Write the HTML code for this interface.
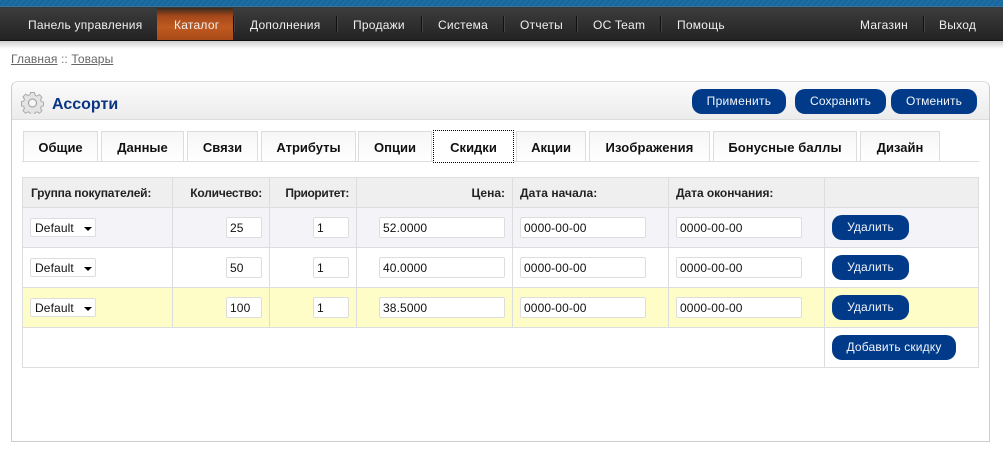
<!DOCTYPE html>
<html><head><meta charset="utf-8">
<style>
html,body{margin:0;padding:0;background:#fff}
body{width:1003px;height:453px;position:relative;overflow:hidden;font-family:"Liberation Sans",Arial,sans-serif;font-size:12px;color:#000}
.a{position:absolute}
#top{left:0;top:0;width:1003px;height:6px;background:repeating-linear-gradient(135deg,#1b6fa6 0 2px,#17659a 2px 4px)}
#top2{left:0;top:6px;width:1003px;height:2px;background:linear-gradient(#4a8db5,#222)}
#nav{left:0;top:8px;width:1003px;height:33px;background:linear-gradient(#3c3c3c,#232323);border-bottom:1px solid #111;box-sizing:border-box}
#sh{left:0;top:41px;width:1003px;height:8px;background:linear-gradient(#cfcfcf,#fff)}
.n{position:absolute;top:17px;color:#f0f0f0;font-size:12px;line-height:16px;white-space:nowrap;letter-spacing:.25px}
.sep{position:absolute;top:16px;width:1px;height:16px;background:#111;border-right:1px solid #444}
#act{left:157px;top:8px;width:76px;height:32px;background:linear-gradient(#3a2a20 0,#a5481a 25%,#bf5a20 60%,#a84a18 100%)}
#crumb{left:11px;top:52px;color:#777;line-height:15px;letter-spacing:.12px}
#crumb u{color:#666}
#box{left:11px;top:81px;width:979px;height:361px;box-sizing:border-box;border:1px solid #ccc;border-top-color:#ddd;border-radius:7px 7px 0 0;background:#fff}
#hd{left:12px;top:82px;width:977px;height:38px;background:linear-gradient(#fbfbfb,#ececec);border-bottom:1px solid #ddd;box-sizing:border-box;border-radius:6px 6px 0 0}
#ttl{left:52px;top:95px;color:#0b3580;font-size:16px;font-weight:bold;line-height:19px}
.b{position:absolute;background:#003a88;color:#f2f5fa;font-size:12px;text-align:center;border-radius:10px;height:25px;line-height:25px;white-space:nowrap;letter-spacing:.15px}
.t{position:absolute;top:131px;height:30px;box-sizing:border-box;border:1px solid #ddd;border-bottom:0;background:linear-gradient(#f6f6f6,#fff);font-weight:bold;font-size:13px;line-height:31px;text-align:center;color:#111;white-space:nowrap}
#tl{left:22px;top:161px;width:957px;height:1px;background:#ddd}
.t.on{background:#fff;border:1px dotted #000;top:130px;height:33px;line-height:33px;z-index:2}
.row{position:absolute;left:22px;width:957px;box-sizing:border-box}
.v{position:absolute;width:1px;top:177px;height:191px;background:#ddd}
.h{position:absolute;left:22px;width:957px;height:1px;background:#ddd}
.th{position:absolute;top:186px;font-weight:bold;color:#222;line-height:15px;white-space:nowrap}
.r{text-align:right}
.i{position:absolute;box-sizing:border-box;height:21px;background:#fff;border:1px solid #ddd;border-radius:2px;font-size:12px;line-height:21px;padding-left:3px;color:#111;white-space:nowrap;letter-spacing:.12px}
.s{height:19px;line-height:19px;padding-left:4px}
.arrow{position:absolute;left:53px;top:8px;width:0;height:0;border:4px solid transparent;border-top-color:#000;border-bottom:0}
</style></head><body>
<div class="a" id="top"></div><div class="a" id="top2"></div><div class="a" id="nav"></div><div class="a" id="sh"></div>
<div class="a" id="act"></div>
<span class="n" style="left:28px">Панель управления</span>
<span class="n" style="left:174px">Каталог</span><span class="sep" style="left:233px"></span>
<span class="n" style="left:250px">Дополнения</span><span class="sep" style="left:336px"></span>
<span class="n" style="left:353px">Продажи</span><span class="sep" style="left:421px"></span>
<span class="n" style="left:438px">Система</span><span class="sep" style="left:503px"></span>
<span class="n" style="left:520px">Отчеты</span><span class="sep" style="left:576px"></span>
<span class="n" style="left:593px">OC Team</span><span class="sep" style="left:660px"></span>
<span class="n" style="left:677px">Помощь</span>
<span class="n" style="left:860px">Магазин</span><span class="sep" style="left:923px"></span>
<span class="n" style="left:939px">Выход</span>

<div class="a" id="crumb"><u>Главная</u> :: <u>Товары</u></div>

<div class="a" id="box"></div><div class="a" id="hd"></div>
<svg class="a" style="left:21px;top:91px" width="23" height="23" viewBox="0 0 23 23">
<path d="M9.5 1.500h4l.6 2.800 1.800.8 2.500-1.500 2.600 2.700-1.500 2.400.7 1.800 2.300.6v3.800l-2.300.6-.7 1.800 1.500 2.400-2.600 2.600-2.500-1.500-1.800.8-.6 1.900h-4l-.6-1.900-1.800-.8-2.500 1.500-2.600-2.600 1.500-2.400-.7-1.800-2.300-.6V10.600l2.300-.6.7-1.800-1.500-2.400 2.600-2.700 2.500 1.500 1.800-.8z" fill="#e4e4e4" stroke="#aaa" stroke-width="1"/>
<circle cx="11.500" cy="12" r="4" fill="#f6f6f6" stroke="#999"/>
</svg>
<div class="a" id="ttl">Ассорти</div>
<div class="b" style="left:692px;top:89px;width:94px;letter-spacing:.3px">Применить</div>
<div class="b" style="left:795px;top:89px;width:91px">Сохранить</div>
<div class="b" style="left:891px;top:89px;width:86px">Отменить</div>

<div class="a" id="tl"></div>
<div class="t" style="left:23px;width:75px">Общие</div>
<div class="t" style="left:101px;width:83px">Данные</div>
<div class="t" style="left:187px;width:71px">Связи</div>
<div class="t" style="left:261px;width:95px">Атрибуты</div>
<div class="t" style="left:358px;width:74px">Опции</div>
<div class="t on" style="left:433px;width:81px">Скидки</div>
<div class="t" style="left:516px;width:70px">Акции</div>
<div class="t" style="left:589px;width:121px;letter-spacing:.15px">Изображения</div>
<div class="t" style="left:713px;width:144px;letter-spacing:.1px">Бонусные баллы</div>
<div class="t" style="left:860px;width:80px">Дизайн</div>

<div class="row" style="top:177px;height:31px;background:#efefef"></div>
<div class="row" style="top:208px;height:40px;background:#f4f4f8"></div>
<div class="row" style="top:288px;height:40px;background:#fefdc8"></div>
<div class="h" style="top:177px"></div><div class="h" style="top:207px"></div><div class="h" style="top:247px"></div><div class="h" style="top:287px"></div><div class="h" style="top:327px"></div><div class="h" style="top:367px"></div>
<div class="v" style="left:22px"></div><div class="v" style="left:172px;height:151px"></div><div class="v" style="left:269px;height:151px"></div><div class="v" style="left:356px;height:151px"></div><div class="v" style="left:512px;height:151px"></div><div class="v" style="left:668px;height:151px"></div><div class="v" style="left:824px"></div><div class="v" style="left:978px"></div>

<div class="th" style="left:31px;letter-spacing:-.2px">Группа покупателей:</div>
<div class="th r" style="left:173px;width:89px;letter-spacing:-.2px">Количество:</div>
<div class="th r" style="left:270px;width:79px;letter-spacing:-.4px">Приоритет:</div>
<div class="th r" style="left:357px;width:148px">Цена:</div>
<div class="th" style="left:520px;letter-spacing:.05px">Дата начала:</div>
<div class="th" style="left:676px;letter-spacing:-.05px">Дата окончания:</div>

<div class="i s" style="left:30px;top:218px;width:66px">Default<span class="arrow"></span></div>
<div class="i" style="left:226px;top:217px;width:36px">25</div>
<div class="i" style="left:313px;top:217px;width:36px">1</div>
<div class="i" style="left:379px;top:217px;width:126px">52.0000</div>
<div class="i" style="left:520px;top:217px;width:126px">0000-00-00</div>
<div class="i" style="left:676px;top:217px;width:126px">0000-00-00</div>
<div class="b" style="left:832px;top:215px;width:77px">Удалить</div>

<div class="i s" style="left:30px;top:258px;width:66px">Default<span class="arrow"></span></div>
<div class="i" style="left:226px;top:257px;width:36px">50</div>
<div class="i" style="left:313px;top:257px;width:36px">1</div>
<div class="i" style="left:379px;top:257px;width:126px">40.0000</div>
<div class="i" style="left:520px;top:257px;width:126px">0000-00-00</div>
<div class="i" style="left:676px;top:257px;width:126px">0000-00-00</div>
<div class="b" style="left:832px;top:255px;width:77px">Удалить</div>

<div class="i s" style="left:30px;top:298px;width:66px">Default<span class="arrow"></span></div>
<div class="i" style="left:226px;top:297px;width:36px">100</div>
<div class="i" style="left:313px;top:297px;width:36px">1</div>
<div class="i" style="left:379px;top:297px;width:126px">38.5000</div>
<div class="i" style="left:520px;top:297px;width:126px">0000-00-00</div>
<div class="i" style="left:676px;top:297px;width:126px">0000-00-00</div>
<div class="b" style="left:832px;top:295px;width:77px">Удалить</div>

<div class="b" style="left:832px;top:335px;width:124px">Добавить скидку</div>
</body></html>
